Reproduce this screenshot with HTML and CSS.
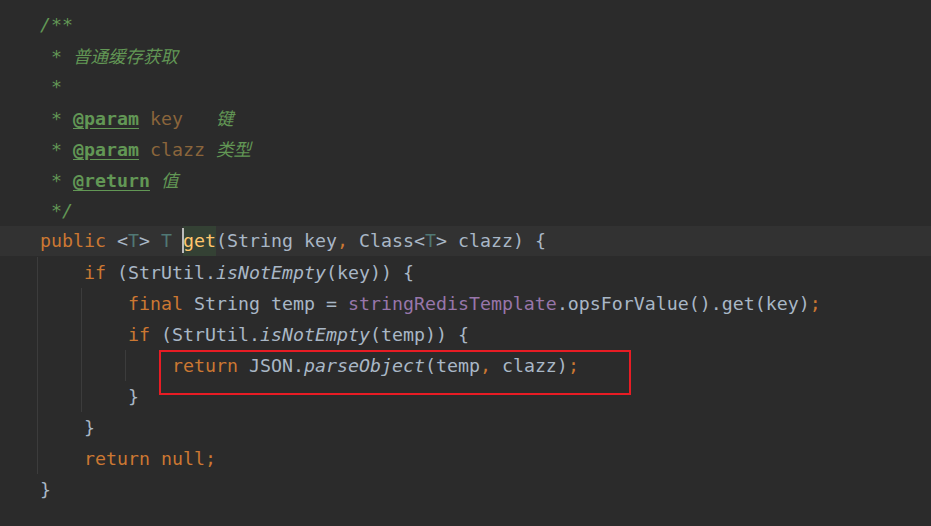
FILE: index.html
```html
<!DOCTYPE html>
<html lang="zh">
<head>
<meta charset="utf-8">
<title>Code</title>
<link rel="stylesheet" href="styles.css">
</head>
<body>
<div class="editor">
  <div class="line"><span class="doc">/**</span></div>
  <div class="line"><span class="doc"> * <span class="cjk">普通缓存获取</span></span></div>
  <div class="line"><span class="doc"> *</span></div>
  <div class="line"><span class="doc"> * <span class="tag">@param</span> <span class="pn">key</span>   <span class="cjk">键</span></span></div>
  <div class="line"><span class="doc"> * <span class="tag">@param</span> <span class="pn">clazz</span> <span class="cjk">类型</span></span></div>
  <div class="line"><span class="doc"> * <span class="tag">@return</span> <span class="cjk">值</span></span></div>
  <div class="line"><span class="doc"> */</span></div>
  <div class="line current"><span class="kw">public</span> &lt;<span class="tp">T</span>&gt; <span class="tp">T</span> <span class="ident">get</span>(String key<span class="kw">,</span> Class&lt;<span class="tp">T</span>&gt; clazz) {</div>
  <div class="line g1">    <span class="kw">if</span> (StrUtil.<span class="st">isNotEmpty</span>(key)) {</div>
  <div class="line g2">        <span class="kw">final</span> String temp = <span class="fld">stringRedisTemplate</span>.opsForValue().get(key)<span class="kw">;</span></div>
  <div class="line g2">        <span class="kw">if</span> (StrUtil.<span class="st">isNotEmpty</span>(temp)) {</div>
  <div class="line g3 marked">            <span class="kw">return</span> JSON.<span class="st">parseObject</span>(temp<span class="kw">,</span> clazz)<span class="kw">;</span><span class="box"></span></div>
  <div class="line g2">        }</div>
  <div class="line g1">    }</div>
  <div class="line g1">    <span class="kw">return null;</span></div>
  <div class="line">}</div>
</div>
</body>
</html>
```
FILE: styles.css
```css
html, body {
  margin: 0;
  padding: 0;
  background: #2b2b2b;
}

body {
  width: 931px;
  height: 526px;
  overflow: hidden;
}

.editor {
  padding-top: 9px;
  font-family: "DejaVu Sans Mono", "Noto Sans CJK SC", monospace;
  font-size: 18.27px;
  color: #a9b7c6;
}

.line {
  height: 31px;
  line-height: 31px;
  padding-left: 40px;
  white-space: pre;
  background-repeat: no-repeat;
}

.current {
  background-color: #323232;
  height: 30px;
  line-height: 30px;
  margin-bottom: 1px;
}

.g1 {
  background-image: linear-gradient(#3c3c3c, #3c3c3c);
  background-position: 37px 0;
  background-size: 1px 100%;
}

.g2 {
  background-image: linear-gradient(#3c3c3c, #3c3c3c), linear-gradient(#3c3c3c, #3c3c3c);
  background-position: 37px 0, 81px 0;
  background-size: 1px 100%, 1px 100%;
}

.g3 {
  background-image: linear-gradient(#3c3c3c, #3c3c3c), linear-gradient(#3c3c3c, #3c3c3c), linear-gradient(#3c3c3c, #3c3c3c);
  background-position: 37px 0, 81px 0, 125px 0;
  background-size: 1px 100%, 1px 100%, 1px 100%;
}

.doc {
  color: #629755;
  font-style: italic;
}

.cjk {
  font-family: "Noto Sans CJK SC", sans-serif;
  font-size: 17.5px;
}

.tag {
  font-style: normal;
  font-weight: bold;
  text-decoration: underline;
  text-underline-offset: 3px;
}

.pn {
  font-style: normal;
  color: #8a653b;
}

.kw {
  color: #cc7832;
}

.tp {
  color: #507874;
}

.st {
  font-style: italic;
}

.fld {
  color: #9876aa;
}

.ident {
  display: inline-block;
  position: relative;
  color: #ffc66d;
  background: #344134;
  height: 30px;
  vertical-align: top;
}

.ident::before {
  content: "";
  position: absolute;
  left: -1px;
  top: 2px;
  width: 2px;
  height: 25px;
  background: #bbbbbb;
}

.marked {
  position: relative;
}

.box {
  position: absolute;
  left: 159px;
  top: 0;
  width: 472px;
  height: 45px;
  box-sizing: border-box;
  border: 2px solid #e81c24;
}
```
